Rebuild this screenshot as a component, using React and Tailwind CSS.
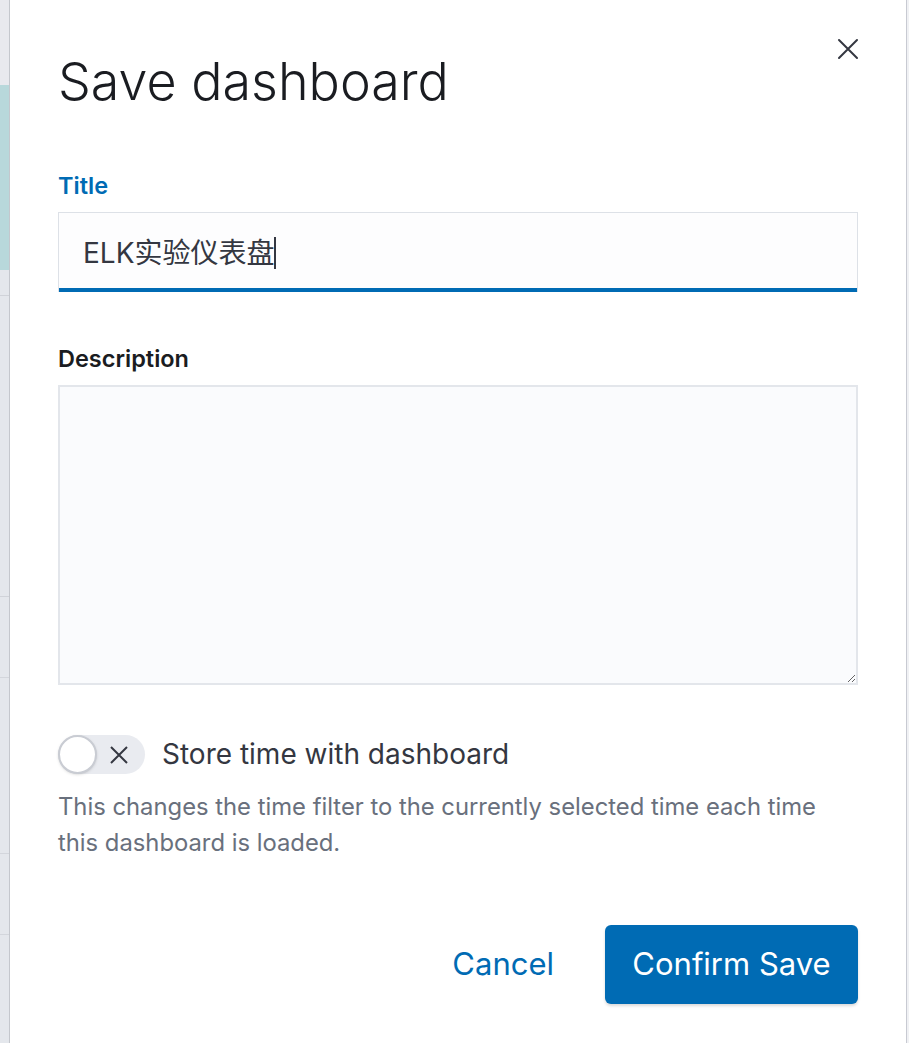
import React from "react";

const font = { fontFamily: "Inter, 'Noto Sans CJK SC', sans-serif" };

const CloseIcon = () => (
  <svg width="24" height="24" viewBox="0 0 24 24" fill="none">
    <path d="M3 3 L21 21 M21 3 L3 21" stroke="#343741" strokeWidth="2" strokeLinecap="round" />
  </svg>
);

const SaveDashboardModal = () => {
  return (
    <div className="relative flex-1 bg-white border-l border-[#c4c7cd] pl-[48px] pr-[48px]">
      <button className="absolute top-[37px] right-[46px]">
        <CloseIcon />
      </button>

      <h1 className="mt-[47px] text-[52px] leading-[70px] font-light text-[#1a1c21]">
        Save dashboard
      </h1>

      <form className="flex flex-col">
        <label className="mt-[55px] text-[23.5px] leading-[28px] font-semibold text-[#006bb4]">
          Title
        </label>
        <div className="mt-[12px] h-[80px] flex items-center pl-[24px] bg-[#fdfdfe] border border-b-0 border-[#dde1e7] shadow-[inset_0_-4px_0_0_#006bb4]">
          <span className="text-[28px] text-[#343741]">ELK实验仪表盘</span>
          <span className="w-[2px] h-[32px] bg-[#343741]"></span>
        </div>

        <label className="mt-[53px] text-[23.5px] leading-[28px] font-semibold text-[#1a1c21]">
          Description
        </label>
        <textarea
          className="mt-[12px] h-[300px] bg-[#fafbfd] border-2 border-[#e3e6eb] outline-none"
          defaultValue=""
        />

        <div className="mt-[48px] flex items-center">
          <div className="relative w-[87px] h-[39px] rounded-full bg-[#e9ebf0]">
            <div className="absolute left-0 top-0 w-[39px] h-[39px] rounded-full bg-white border-2 border-[#c9ccd3] shadow-sm"></div>
            <svg className="absolute left-[51px] top-[10px]" width="20" height="20" viewBox="0 0 20 20">
              <path d="M2 2 L18 18 M18 2 L2 18" stroke="#343741" strokeWidth="2" />
            </svg>
          </div>
          <span className="ml-[17px] text-[28px] text-[#343741]">Store time with dashboard</span>
        </div>

        <p className="mt-[14px] text-[23.8px] leading-[36px] text-[#69707d]">
          This changes the time filter to the currently selected time each time this dashboard is loaded.
        </p>

        <div className="mt-[63px] flex justify-end items-center">
          <button type="button" className="px-[24px] h-[80px] text-[31px] text-[#006bb4]">
            Cancel
          </button>
          <button
            type="button"
            className="ml-[27px] w-[253px] h-[79px] rounded-[6px] bg-[#006bb4] text-white text-[31px] shadow-[0_2px_3px_rgba(0,0,0,0.15)]"
          >
            Confirm Save
          </button>
        </div>
      </form>
    </div>
  );
};

export default function App() {
  return (
    <div className="flex h-[1043px] w-[909px] overflow-hidden bg-white" style={font}>
      <div className="w-[9px] flex flex-col bg-[#e4e7ec]">
        <div className="h-[85px] bg-[#e8e9ee]"></div>
        <div className="h-[185px] bg-[#b8d8db]"></div>
        <div className="h-[25px]"></div>
        <div className="h-px bg-[#d0d3d9]"></div>
        <div className="h-[300px]"></div>
        <div className="h-px bg-[#d0d3d9]"></div>
        <div className="h-[80px]"></div>
        <div className="h-px bg-[#d3d6dc]"></div>
        <div className="h-[175px]"></div>
        <div className="h-px bg-[#d3d6dc]"></div>
        <div className="h-[80px]"></div>
        <div className="h-px bg-[#d3d6dc]"></div>
      </div>
      <SaveDashboardModal />
      <div className="w-[3px] bg-[#f0f1f4] border-l border-[#c8cad2]"></div>
    </div>
  );
}
